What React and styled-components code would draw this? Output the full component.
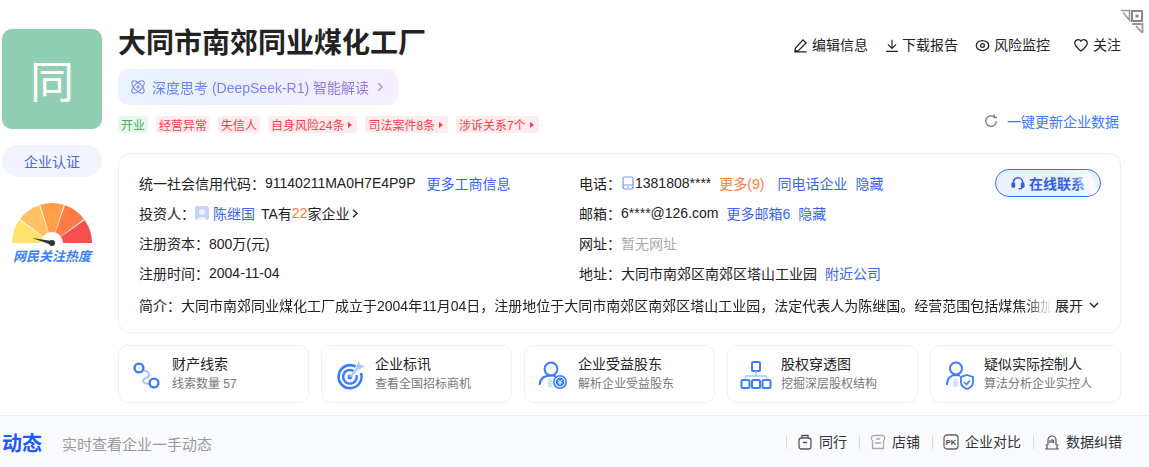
import React from 'react';
import styled, { createGlobalStyle } from 'styled-components';

const Global = createGlobalStyle`
  html, body { margin: 0; padding: 0; background: #fff; }
  body { font-family: "Liberation Sans", "Noto Sans CJK SC", sans-serif; font-size: 14px; color: #222; overflow: hidden; }
  * { box-sizing: border-box; }
`;

const Page = styled.div`position: relative; width: 1149px; height: 467px; overflow: hidden;`;
const Corner = styled.svg`position: absolute; top: 9px; right: 5px; width: 24px; height: 24px;`;
const Main = styled.div`display: flex; gap: 16px; padding: 29px 28px 0 2px;`;
const Side = styled.aside`width: 100px; display: flex; flex-direction: column; align-items: center;`;
const Logo = styled.div`
  width: 100px; height: 100px; border-radius: 10px; background: #91cfb5; color: #fff; font-size: 44px;
  display: flex; align-items: center; justify-content: center; box-shadow: 0 0 2px #d8e8e0;
`;
const CertChip = styled.div`
  width: 100px; height: 32px; margin-top: 16px; border-radius: 16px; background: #f2f5ff; color: #4c68d7;
  display: flex; align-items: center; justify-content: center;
`;
const Gauge = styled.svg`width: 80px; height: 44px; margin-top: 25px; display: block;`;
const HeatLabel = styled.div`
  margin-top: 3px; font-size: 13px; line-height: 16px; font-weight: 700; font-style: italic; color: #3b82f0; white-space: nowrap;
`;
const Content = styled.div`flex: 1; min-width: 0;`;
const TitleRow = styled.div`display: flex; justify-content: space-between; align-items: flex-start;`;
const Title = styled.h1`margin: 0; font-size: 28px; line-height: 30px; font-weight: 700; color: #222;`;
const Actions = styled.div`display: flex; gap: 17px; padding-top: 7px;`;
const Action = styled.div`display: flex; align-items: center; gap: ${p => p.$gap ?? 4}px; line-height: 18px; color: #222; margin-left: ${p => p.$ml || 0}px;`;
const Deep = styled.div`
  display: flex; align-items: center; width: 280px; height: 36px; margin-top: 10px; padding-left: 12px; border-radius: 10px;
  background: linear-gradient(90deg, #eaf3ff 0%, #ecf0ff 50%, #f6f0ff 100%); font-size: 14px;
`;
const DeepText = styled.span`
  margin-left: 6px; background: linear-gradient(90deg, #5b83ee, #9a70f0); -webkit-background-clip: text; background-clip: text; color: transparent; white-space: nowrap;
`;
const TagRow = styled.div`display: flex; justify-content: space-between; align-items: flex-start; margin-top: 11px; padding-right: 2px;`;
const Tags = styled.div`display: flex; gap: 8px;`;
const Tag = styled.span`
  display: inline-flex; align-items: center; height: 17px; padding: 0 ${p => p.$arrow ? 5 : 3}px 0 3px; border-radius: 3px; font-size: 12px; white-space: nowrap;
  background: ${p => p.$green ? '#e9f7ee' : '#ffecef'}; color: ${p => p.$green ? '#3fae5e' : '#f5404c'};
`;
const Caret = styled.i`width: 0; height: 0; margin-left: 4px; border-left: 4px solid #f5404c; border-top: 3px solid transparent; border-bottom: 3px solid transparent;`;
const Refresh = styled.div`display: flex; align-items: center; gap: 9px; height: 17px; margin-top: -4px; color: #3a7bff;`;

const InfoCard = styled.section`
  margin-top: 20px; height: 180px; padding: 14px 20px 0; border: 1px solid #eceef3; border-radius: 12px;
`;
const Columns = styled.div`display: flex;`;
const Col = styled.div`width: ${p => p.$w || 'auto'}; flex: ${p => p.$w ? 'none' : 1};`;
const Row = styled.div`display: flex; align-items: center; height: 30px; white-space: nowrap; justify-content: ${p => p.$between ? 'space-between' : 'flex-start'};`;
const Group = styled.div`display: flex; align-items: center;`;
const Label = styled.span`color: #222;`;
const Value = styled.span`color: ${p => p.$muted ? '#aaa' : '#222'}; margin-left: ${p => p.$ml ?? 0}px;`;
const LinkText = styled.span`color: #3a66ee; margin-left: ${p => p.$ml ?? 8}px;`;
const Orange = styled.span`color: #ff7a3d; margin-left: ${p => p.$ml ?? 0}px;`;
const Avatar = styled.svg`width: 14px; height: 14px; margin-right: 4px;`;
const PhoneIcon = styled.svg`width: 12px; height: 14px; margin: 0 1px 0 1px;`;
const Contact = styled.div`
  position: relative; overflow: hidden; display: flex; align-items: center; justify-content: center; gap: 4px; width: 106px; height: 28px; margin-right: -1px;
  border: 1px solid #3370ff; border-radius: 14px; background: #eaf1ff; color: #2f62d8; font-size: 14px; font-weight: 700;
  &::after { content: ""; position: absolute; top: 0; bottom: 0; right: 6px; width: 20px; transform: skewX(25deg); background: linear-gradient(90deg, rgba(255,255,255,.1), rgba(255,255,255,.85)); }
`;
const IntroRow = styled.div`display: flex; align-items: center; height: 30px; margin-top: 2px; white-space: nowrap;`;
const IntroText = styled.div`
  flex: 1; min-width: 0; overflow: hidden;
  -webkit-mask-image: linear-gradient(90deg, #000 97%, transparent 100%); mask-image: linear-gradient(90deg, #000 97%, transparent 100%);
`;
const Expand = styled.div`display: flex; align-items: center; gap: 5px; margin-left: 3px;`;

const Shortcuts = styled.div`display: grid; grid-template-columns: repeat(5, 191px); gap: 12px; margin-top: 12px;`;
const Shortcut = styled.div`
  display: flex; align-items: center; height: 58px; padding-left: 12px; border: 1px solid #eef0f6; border-radius: 10px; background: #fff;
`;
const ShortcutIcon = styled.svg`width: 34px; height: 34px; flex: none; margin-right: 7px;`;
const ShortcutTitle = styled.div`font-size: 14px; line-height: 18px; color: #222;`;
const ShortcutSub = styled.div`font-size: 12px; line-height: 18px; color: #777; margin-top: 2px;`;

const Footer = styled.footer`
  position: absolute; left: 0; right: 0; top: 415px; bottom: 0; display: flex; align-items: center; justify-content: space-between;
  padding: 4px 27px 0 2px; background: #fafbff; border-top: 1px solid #eef0f6;
`;
const FooterLeft = styled.div`display: flex; align-items: center; gap: 20px;`;
const FooterTitle = styled.div`font-size: 20px; font-weight: 700; color: #1e5bff; line-height: 28px;`;
const FooterSub = styled.div`font-size: 15px; color: #999;`;
const Tools = styled.div`display: flex; align-items: center; margin-top: -3px;`;
const Tool = styled.div`
  display: flex; align-items: center; gap: 6px; color: #333; padding-left: 11px; margin-left: 12px; position: relative; line-height: 20px;
  &::before { content: ""; position: absolute; left: 0; top: 3px; bottom: 3px; width: 1px; background: #d9dbe0; }
`;
const ToolIcon = styled.svg`width: 16px; height: 16px; flex: none;`;

const sector = (cx, cy, r0, r1, a0, a1) => {
  const p = (r, a) => {
    const t = (a * Math.PI) / 180;
    return `${(cx - r * Math.cos(t)).toFixed(2)} ${(cy - r * Math.sin(t)).toFixed(2)}`;
  };
  return `M${p(r0, a0)} L${p(r1, a0)} A${r1} ${r1} 0 0 1 ${p(r1, a1)} L${p(r0, a1)} A${r0} ${r0} 0 0 0 ${p(r0, a0)} Z`;
};
const gaugeColors = ['#ffe36e', '#ffc163', '#ff9f4a', '#ff7a45', '#f5504f'];

const Blue = '#3b7cff';
const Light = '#a9c6ff';

const icons = [
  <g fill="none">
    <path d="M12 13 C19 15 20 19 15 21 C10 23 12 27 19 27" stroke={Light} strokeWidth="2.2" />
    <circle cx="8" cy="11" r="4.4" stroke={Blue} strokeWidth="2.4" />
    <circle cx="23" cy="26" r="4.4" stroke={Blue} strokeWidth="2.4" />
  </g>,
  <g fill="none">
    <path d="M21.5 9.5 A11.5 11.5 0 1 0 27 16" stroke={Blue} strokeWidth="2.6" />
    <path d="M19.5 14 A6.8 6.8 0 1 0 22.5 18" stroke={Blue} strokeWidth="2.4" />
    <circle cx="16" cy="20" r="2.4" fill={Blue} />
    <path d="M16 20 L25 10" stroke={Light} strokeWidth="2.2" />
    <path d="M22 10 L25 4 L26.5 8 L31 9 L25.5 12.5 Z" fill={Light} />
  </g>,
  <g fill="none">
    <circle cx="14" cy="12" r="6.4" stroke={Blue} strokeWidth="2" />
    <path d="M2.5 28 C3 21 8 18.5 14 18.5 C16 18.5 18 19 19 19.5" stroke={Blue} strokeWidth="2" />
    <ellipse cx="13" cy="26" rx="2.6" ry="4.5" fill={Light} opacity=".5" />
    <circle cx="23" cy="25" r="6.2" fill="#fff" stroke={Blue} strokeWidth="1.6" />
    <circle cx="23" cy="25" r="4.4" fill={Blue} />
    <path d="M21 22.5 L23 25 L25 22.5 M23 25 V28 M21 25.8 H25" stroke="#fff" strokeWidth="1" />
  </g>,
  <g fill="none">
    <rect x="12" y="5" width="8" height="9" rx="1.5" stroke={Blue} strokeWidth="2" />
    <path d="M16 14 V19 M5.5 23 V19 H26.5 V23" stroke={Light} strokeWidth="1.4" />
    <rect x="1.5" y="23" width="8" height="8" rx="1.5" stroke={Blue} strokeWidth="2" />
    <rect x="12" y="23" width="8" height="8" rx="1.5" stroke={Blue} strokeWidth="2" />
    <rect x="22.5" y="23" width="8" height="8" rx="1.5" stroke={Blue} strokeWidth="2" />
  </g>,
  <g fill="none">
    <circle cx="13" cy="11.5" r="6" stroke={Blue} strokeWidth="2" />
    <path d="M4 28 C4 21 8 18 13 18 C15 18 16 18.3 17 19" stroke={Blue} strokeWidth="2" />
    <ellipse cx="12.5" cy="26" rx="2.6" ry="4.5" fill={Light} opacity=".5" />
    <path d="M24 18 L30 20 V25 C30 29 27 31 24 32 C21 31 18 29 18 25 V20 Z" stroke={Blue} strokeWidth="1.8" fill="#fff" />
    <path d="M21 25 L23.5 27.5 L27 23.5" stroke={Blue} strokeWidth="1.6" />
  </g>,
];

const shortcuts = [
  ['财产线索', '线索数量 57'],
  ['企业标讯', '查看全国招标商机'],
  ['企业受益股东', '解析企业受益股东'],
  ['股权穿透图', '挖掘深层股权结构'],
  ['疑似实际控制人', '算法分析企业实控人'],
];

export default function App() {
  return (
    <Page>
      <Global />
      <Corner viewBox="0 0 24 24">
        <path d="M1 1.5 H9.5 V11 L3 3.5" fill="#fff" stroke="#9a9a9a" strokeWidth="1.6" />
        <rect x="12" y="2" width="10" height="10" fill="none" stroke="#8a8a8a" strokeWidth="2" />
        <rect x="15.5" y="5.5" width="3" height="3" fill="#8a8a8a" />
        <path d="M12 15 H22.5 V24 L16 17" fill="#fff" stroke="#9a9a9a" strokeWidth="1.8" />
      </Corner>
      <Main>
        <Side>
          <Logo>同</Logo>
          <CertChip>企业认证</CertChip>
          <Gauge viewBox="0 0 80 44">
            {gaugeColors.map((c, i) => (
              <path key={c} d={sector(40, 41, 11, 40, i * 36 + (i ? 0.8 : 0), (i + 1) * 36 - (i < 4 ? 0.8 : 0))} fill={c} />
            ))}
            <path d="M20 36 L40 39 L40 43 Z" fill="#333" />
            <circle cx="40" cy="41" r="3" fill="#333" />
          </Gauge>
          <HeatLabel>网民关注热度</HeatLabel>
        </Side>
        <Content>
          <TitleRow>
            <Title>大同市南郊同业煤化工厂</Title>
            <Actions>
              <Action>
                <svg width="15" height="15" viewBox="0 0 24 24" fill="none" stroke="#222" strokeWidth="2"><path d="M3 21 L4 16 L16 3 L21 8 L9 20 Z M2 22 H22" /></svg>
                编辑信息
              </Action>
              <Action $gap={3}>
                <svg width="14" height="15" viewBox="0 0 24 24" fill="none" stroke="#222" strokeWidth="2"><path d="M12 2 V17 M5 10 L12 17 L19 10 M2 22 H22" /></svg>
                下载报告
              </Action>
              <Action $gap={4}>
                <svg width="15" height="15" viewBox="0 0 24 24" fill="none" stroke="#222" strokeWidth="2"><ellipse cx="12" cy="12" rx="10" ry="8" /><circle cx="12" cy="12" r="3" /></svg>
                风险监控
              </Action>
              <Action $ml={6}>
                <svg width="16" height="15" viewBox="0 0 24 24" fill="none" stroke="#222" strokeWidth="2"><path d="M12 21 C6 16 2 13 2 8 A5.5 5.5 0 0 1 12 5 A5.5 5.5 0 0 1 22 8 C22 13 18 16 12 21 Z" /></svg>
                关注
              </Action>
            </Actions>
          </TitleRow>
          <Deep>
            <svg width="16" height="16" viewBox="0 0 24 24" fill="none" stroke="#7484ee" strokeWidth="1.6">
              <ellipse cx="12" cy="12" rx="5.5" ry="12" transform="rotate(45 12 12)" />
              <ellipse cx="12" cy="12" rx="5.5" ry="12" transform="rotate(-45 12 12)" />
              <circle cx="12" cy="12" r="1.5" />
            </svg>
            <DeepText>深度思考 (DeepSeek-R1) 智能解读</DeepText>
            <svg width="10" height="12" viewBox="0 0 24 24" fill="none" stroke="#a27cf0" strokeWidth="2.6" style={{ marginLeft: 6 }}><path d="M8 3 L17 12 L8 21" /></svg>
          </Deep>
          <TagRow>
            <Tags>
              <Tag $green>开业</Tag>
              <Tag>经营异常</Tag>
              <Tag>失信人</Tag>
              <Tag $arrow>自身风险24条<Caret /></Tag>
              <Tag $arrow>司法案件8条<Caret /></Tag>
              <Tag $arrow>涉诉关系7个<Caret /></Tag>
            </Tags>
            <Refresh>
              <svg width="14" height="14" viewBox="0 0 24 24" fill="none" stroke="#777" strokeWidth="2.2"><path d="M21 12 A9 9 0 1 1 17.5 5 M17.5 1 V6 H22" /></svg>
              一键更新企业数据
            </Refresh>
          </TagRow>
          <InfoCard>
            <Columns>
              <Col $w="440px">
                <Row><Label>统一社会信用代码：</Label><Value>91140211MA0H7E4P9P</Value><LinkText $ml={11}>更多工商信息</LinkText></Row>
                <Row>
                  <Label>投资人：</Label>
                  <Avatar viewBox="0 0 14 14"><rect width="14" height="14" rx="2" fill="#c3d5fb" /><circle cx="7" cy="6" r="3" fill="#eef3ff" /><path d="M2 14 C3 10 11 10 12 14 Z" fill="#eef3ff" /></Avatar>
                  <LinkText $ml={0}>陈继国</LinkText>
                  <Value $ml={6}>TA有</Value><Orange>22</Orange><Value>家企业</Value>
                  <svg width="10" height="13" viewBox="0 0 24 24" fill="none" stroke="#222" strokeWidth="3.2" style={{ marginLeft: 1 }}><path d="M7 3 L17 12 L7 21" /></svg>
                </Row>
                <Row><Label>注册资本：</Label><Value>800万(元)</Value></Row>
                <Row><Label>注册时间：</Label><Value>2004-11-04</Value></Row>
              </Col>
              <Col>
                <Row $between>
                  <Group>
                    <Label>电话：</Label>
                    <PhoneIcon viewBox="0 0 12 14"><rect x="1" y="1" width="10" height="12" rx="2" fill="none" stroke="#7199ee" strokeWidth="1.2" /><path d="M1 9 H11 M5 11 H7" stroke="#7199ee" strokeWidth="1" /></PhoneIcon>
                    <Value>1381808****</Value>
                    <Orange $ml={8}>更多(9)</Orange>
                    <LinkText $ml={13}>同电话企业</LinkText>
                    <LinkText>隐藏</LinkText>
                  </Group>
                  <Contact>
                    <svg width="14" height="14" viewBox="0 0 24 24" fill="none" stroke="#2f62d8" strokeWidth="2.6"><path d="M4 14 V11 A8 8 0 0 1 20 11 V14" /><rect x="2" y="12" width="4" height="7" rx="1.5" fill="#2f62d8" /><rect x="18" y="12" width="4" height="7" rx="1.5" fill="#2f62d8" /><path d="M20 19 C19 21 16 22 13 22" /></svg>
                    在线联系
                  </Contact>
                </Row>
                <Row><Label>邮箱：</Label><Value>6****@126.com</Value><LinkText>更多邮箱6</LinkText><LinkText>隐藏</LinkText></Row>
                <Row><Label>网址：</Label><Value $muted>暂无网址</Value></Row>
                <Row><Label>地址：</Label><Value>大同市南郊区南郊区塔山工业园</Value><LinkText>附近公司</LinkText></Row>
              </Col>
            </Columns>
            <IntroRow>
              <Label>简介：</Label>
              <IntroText>大同市南郊同业煤化工厂成立于2004年11月04日，注册地位于大同市南郊区南郊区塔山工业园，法定代表人为陈继国。经营范围包括煤焦油加</IntroText>
              <Expand>
                展开
                <svg width="12" height="9" viewBox="0 0 24 18" fill="none" stroke="#222" strokeWidth="3"><path d="M4 4 L12 12 L20 4" /></svg>
              </Expand>
            </IntroRow>
          </InfoCard>
          <Shortcuts>
            {shortcuts.map(([t, s], i) => (
              <Shortcut key={t}>
                <ShortcutIcon viewBox="0 0 34 34">{icons[i]}</ShortcutIcon>
                <div>
                  <ShortcutTitle>{t}</ShortcutTitle>
                  <ShortcutSub>{s}</ShortcutSub>
                </div>
              </Shortcut>
            ))}
          </Shortcuts>
        </Content>
      </Main>
      <Footer>
        <FooterLeft>
          <FooterTitle>动态</FooterTitle>
          <FooterSub>实时查看企业一手动态</FooterSub>
        </FooterLeft>
        <Tools>
          <Tool>
            <ToolIcon viewBox="0 0 16 16"><rect x="2" y="4" width="12" height="11" rx="2.5" fill="none" stroke="#555" strokeWidth="1.3" /><path d="M5 4 V1.5 H11 V4 M6 8.5 H10" fill="none" stroke="#555" strokeWidth="1.3" /></ToolIcon>
            同行
          </Tool>
          <Tool>
            <ToolIcon viewBox="0 0 16 16"><path d="M4 1.5 H12 C15 1.5 15.5 5 13.5 7 V14.5 H2.5 V7 C0.5 5 1 1.5 4 1.5 Z M5 9 H11 M6 5 H10" fill="none" stroke="#aaa" strokeWidth="1.3" /></ToolIcon>
            店铺
          </Tool>
          <Tool>
            <ToolIcon viewBox="0 0 16 16"><rect x="1" y="1" width="14" height="14" rx="3" fill="none" stroke="#666" strokeWidth="1.3" /><text x="8" y="11" fontSize="7.5" fontWeight="700" textAnchor="middle" fill="#444">PK</text></ToolIcon>
            企业对比
          </Tool>
          <Tool>
            <ToolIcon viewBox="0 0 16 16"><path d="M1 15 H15 M3 15 V11 H1.5 M13 15 V11 H14.5 M4 11 V6 A4 4 0 0 1 12 6 V11 M8 5 V9 M6 6 V9 M10 6 A2 2 0 0 0 10 9" fill="none" stroke="#555" strokeWidth="1.2" /></ToolIcon>
            数据纠错
          </Tool>
        </Tools>
      </Footer>
    </Page>
  );
}
